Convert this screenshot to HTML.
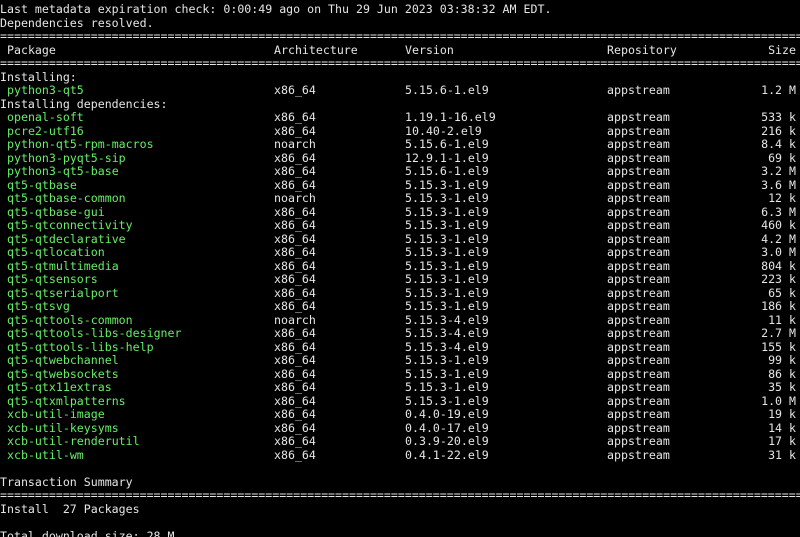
<!DOCTYPE html>
<html><head><meta charset="utf-8"><style>
html,body{margin:0;padding:0;background:#000;width:800px;height:537px;overflow:hidden}
body{font-family:"DejaVu Sans Mono","Liberation Mono",monospace;font-size:11.6px;color:#e6e6e6;position:relative}
.c{position:absolute;left:0;top:2px;width:800px;height:540px}
.r{position:absolute;left:0;height:13.5px;line-height:13.5px;white-space:pre;width:800px;overflow:hidden}
.r span{position:absolute;top:0}
.g{color:#66ee66}
.a{left:274px}.v{left:405px}.p{left:607px}.s{right:4px;text-align:right}
</style></head><body><div class="c">
<div class="r" style="top:1px">Last metadata expiration check: 0:00:49 ago on Thu 29 Jun 2023 03:38:32 AM EDT.</div>
<div class="r" style="top:14.5px">Dependencies resolved.</div>
<div class="r" style="top:28px">===================================================================================================================</div>
<div class="r" style="top:41.5px"><span style="left:7px">Package</span><span class="a">Architecture</span><span class="v">Version</span><span class="p">Repository</span><span class="s">Size</span></div>
<div class="r" style="top:55px">===================================================================================================================</div>
<div class="r" style="top:68.5px">Installing:</div>
<div class="r" style="top:82px"><span class="g" style="left:7px">python3-qt5</span><span class="a">x86_64</span><span class="v">5.15.6-1.el9</span><span class="p">appstream</span><span class="s">1.2 M</span></div>
<div class="r" style="top:95.5px">Installing dependencies:</div>
<div class="r" style="top:109px"><span class="g" style="left:7px">openal-soft</span><span class="a">x86_64</span><span class="v">1.19.1-16.el9</span><span class="p">appstream</span><span class="s">533 k</span></div>
<div class="r" style="top:122.5px"><span class="g" style="left:7px">pcre2-utf16</span><span class="a">x86_64</span><span class="v">10.40-2.el9</span><span class="p">appstream</span><span class="s">216 k</span></div>
<div class="r" style="top:136px"><span class="g" style="left:7px">python-qt5-rpm-macros</span><span class="a">noarch</span><span class="v">5.15.6-1.el9</span><span class="p">appstream</span><span class="s">8.4 k</span></div>
<div class="r" style="top:149.5px"><span class="g" style="left:7px">python3-pyqt5-sip</span><span class="a">x86_64</span><span class="v">12.9.1-1.el9</span><span class="p">appstream</span><span class="s">69 k</span></div>
<div class="r" style="top:163px"><span class="g" style="left:7px">python3-qt5-base</span><span class="a">x86_64</span><span class="v">5.15.6-1.el9</span><span class="p">appstream</span><span class="s">3.2 M</span></div>
<div class="r" style="top:176.5px"><span class="g" style="left:7px">qt5-qtbase</span><span class="a">x86_64</span><span class="v">5.15.3-1.el9</span><span class="p">appstream</span><span class="s">3.6 M</span></div>
<div class="r" style="top:190px"><span class="g" style="left:7px">qt5-qtbase-common</span><span class="a">noarch</span><span class="v">5.15.3-1.el9</span><span class="p">appstream</span><span class="s">12 k</span></div>
<div class="r" style="top:203.5px"><span class="g" style="left:7px">qt5-qtbase-gui</span><span class="a">x86_64</span><span class="v">5.15.3-1.el9</span><span class="p">appstream</span><span class="s">6.3 M</span></div>
<div class="r" style="top:217px"><span class="g" style="left:7px">qt5-qtconnectivity</span><span class="a">x86_64</span><span class="v">5.15.3-1.el9</span><span class="p">appstream</span><span class="s">460 k</span></div>
<div class="r" style="top:230.5px"><span class="g" style="left:7px">qt5-qtdeclarative</span><span class="a">x86_64</span><span class="v">5.15.3-1.el9</span><span class="p">appstream</span><span class="s">4.2 M</span></div>
<div class="r" style="top:244px"><span class="g" style="left:7px">qt5-qtlocation</span><span class="a">x86_64</span><span class="v">5.15.3-1.el9</span><span class="p">appstream</span><span class="s">3.0 M</span></div>
<div class="r" style="top:257.5px"><span class="g" style="left:7px">qt5-qtmultimedia</span><span class="a">x86_64</span><span class="v">5.15.3-1.el9</span><span class="p">appstream</span><span class="s">804 k</span></div>
<div class="r" style="top:271px"><span class="g" style="left:7px">qt5-qtsensors</span><span class="a">x86_64</span><span class="v">5.15.3-1.el9</span><span class="p">appstream</span><span class="s">223 k</span></div>
<div class="r" style="top:284.5px"><span class="g" style="left:7px">qt5-qtserialport</span><span class="a">x86_64</span><span class="v">5.15.3-1.el9</span><span class="p">appstream</span><span class="s">65 k</span></div>
<div class="r" style="top:298px"><span class="g" style="left:7px">qt5-qtsvg</span><span class="a">x86_64</span><span class="v">5.15.3-1.el9</span><span class="p">appstream</span><span class="s">186 k</span></div>
<div class="r" style="top:311.5px"><span class="g" style="left:7px">qt5-qttools-common</span><span class="a">noarch</span><span class="v">5.15.3-4.el9</span><span class="p">appstream</span><span class="s">11 k</span></div>
<div class="r" style="top:325px"><span class="g" style="left:7px">qt5-qttools-libs-designer</span><span class="a">x86_64</span><span class="v">5.15.3-4.el9</span><span class="p">appstream</span><span class="s">2.7 M</span></div>
<div class="r" style="top:338.5px"><span class="g" style="left:7px">qt5-qttools-libs-help</span><span class="a">x86_64</span><span class="v">5.15.3-4.el9</span><span class="p">appstream</span><span class="s">155 k</span></div>
<div class="r" style="top:352px"><span class="g" style="left:7px">qt5-qtwebchannel</span><span class="a">x86_64</span><span class="v">5.15.3-1.el9</span><span class="p">appstream</span><span class="s">99 k</span></div>
<div class="r" style="top:365.5px"><span class="g" style="left:7px">qt5-qtwebsockets</span><span class="a">x86_64</span><span class="v">5.15.3-1.el9</span><span class="p">appstream</span><span class="s">86 k</span></div>
<div class="r" style="top:379px"><span class="g" style="left:7px">qt5-qtx11extras</span><span class="a">x86_64</span><span class="v">5.15.3-1.el9</span><span class="p">appstream</span><span class="s">35 k</span></div>
<div class="r" style="top:392.5px"><span class="g" style="left:7px">qt5-qtxmlpatterns</span><span class="a">x86_64</span><span class="v">5.15.3-1.el9</span><span class="p">appstream</span><span class="s">1.0 M</span></div>
<div class="r" style="top:406px"><span class="g" style="left:7px">xcb-util-image</span><span class="a">x86_64</span><span class="v">0.4.0-19.el9</span><span class="p">appstream</span><span class="s">19 k</span></div>
<div class="r" style="top:419.5px"><span class="g" style="left:7px">xcb-util-keysyms</span><span class="a">x86_64</span><span class="v">0.4.0-17.el9</span><span class="p">appstream</span><span class="s">14 k</span></div>
<div class="r" style="top:433px"><span class="g" style="left:7px">xcb-util-renderutil</span><span class="a">x86_64</span><span class="v">0.3.9-20.el9</span><span class="p">appstream</span><span class="s">17 k</span></div>
<div class="r" style="top:446.5px"><span class="g" style="left:7px">xcb-util-wm</span><span class="a">x86_64</span><span class="v">0.4.1-22.el9</span><span class="p">appstream</span><span class="s">31 k</span></div>
<div class="r" style="top:473.5px">Transaction Summary</div>
<div class="r" style="top:487px">===================================================================================================================</div>
<div class="r" style="top:500.5px">Install  27 Packages</div>
<div class="r" style="top:527.5px">Total download size: 28 M</div>
</div></body></html>
